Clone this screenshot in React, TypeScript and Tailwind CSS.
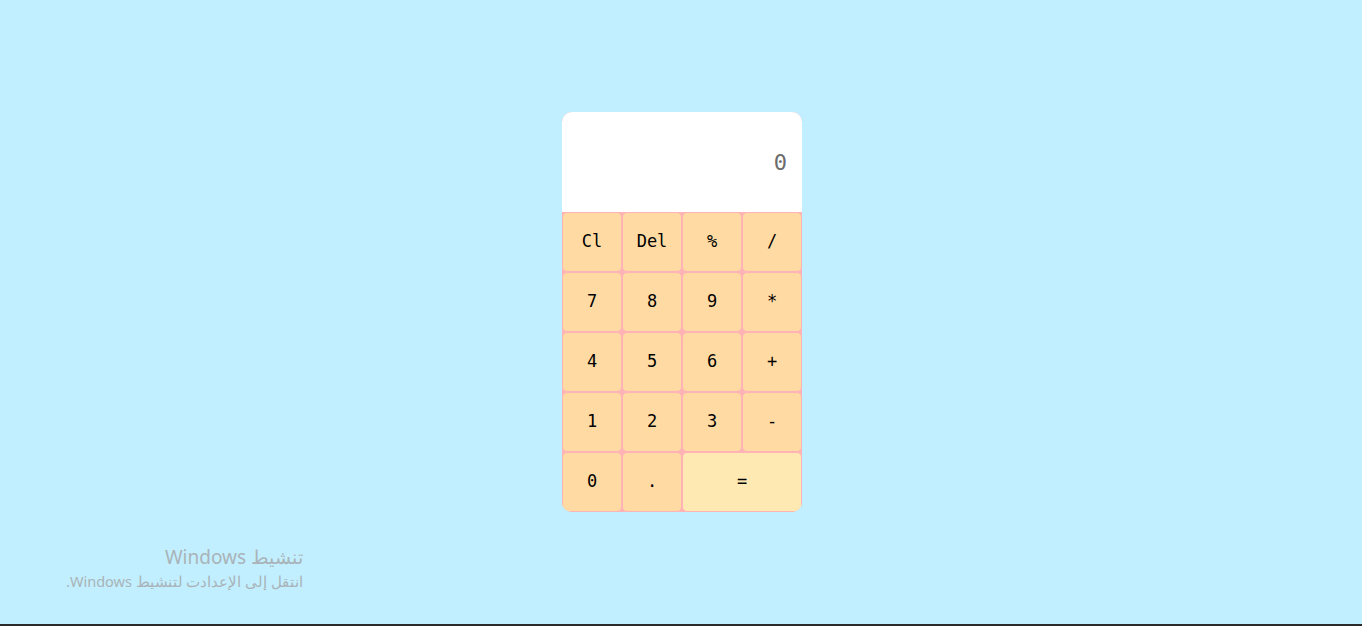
import React, { useState } from 'react';

const keys = ['Cl', 'Del', '%', '/', '7', '8', '9', '*', '4', '5', '6', '+', '1', '2', '3', '-', '0', '.'];

const App = () => {
  const [value, setValue] = useState('0');

  const press = (k: string) => {
    if (k === 'Cl') return setValue('0');
    if (k === 'Del') return setValue(value.length > 1 ? value.slice(0, -1) : '0');
    setValue(value === '0' ? k : value + k);
  };

  const calc = () => {
    try {
      // eslint-disable-next-line no-new-func
      const r = Function(`return (${value})`)();
      setValue(String(r));
    } catch {
      setValue('Error');
    }
  };

  return (
    <div className="relative flex h-screen flex-col bg-[#c2efff]">
      <div className="flex flex-1 items-center justify-center pl-[2px]">
        <div className="w-[240px] overflow-hidden rounded-[10px] bg-[#ffb3b5] font-['DejaVu_Sans_Mono',monospace]">
          <div className="flex h-[100px] items-center justify-end bg-white pr-[15px] text-[22px] text-[#6b6b6b]">
            {value}
          </div>
          <div className="grid grid-cols-4 grid-rows-5">
            {keys.map((k) => (
              <button
                key={k}
                onClick={() => press(k)}
                className="h-[60px] rounded-[5px] border border-[#ffb3b5] bg-[#ffdba3] text-[17px] text-black"
              >
                {k}
              </button>
            ))}
            <button
              onClick={calc}
              className="col-span-2 h-[60px] rounded-[5px] border border-[#ffb3b5] bg-[#ffe9b3] text-[17px] text-black"
            >
              =
            </button>
          </div>
        </div>
      </div>
      <div className="h-[2px] bg-[#2b2b2b]" />
      <div
        dir="rtl"
        className="absolute left-[40px] top-[543px] w-[263px] text-right font-['Noto_Sans',sans-serif] text-[#a9b3b8]"
      >
        <div className="text-[19px] leading-[28px]">تنشيط Windows</div>
        <div className="text-[14.5px] leading-[20px]">انتقل إلى الإعدادت لتنشيط Windows.</div>
      </div>
    </div>
  );
};

export default App;
